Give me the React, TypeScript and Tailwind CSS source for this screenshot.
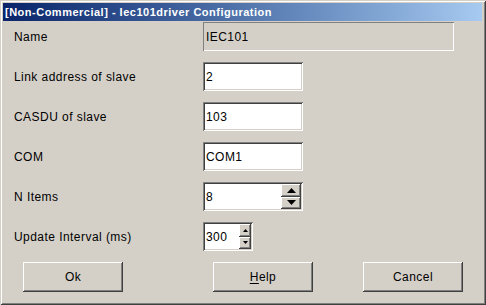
import React from 'react';

const raised =
  'shadow-[inset_-1px_-1px_#404040,inset_1px_1px_#ffffff,inset_-2px_-2px_#808080,inset_2px_2px_#d4d0c8]';
const sunken =
  'shadow-[inset_1px_1px_#808080,inset_-1px_-1px_#ffffff,inset_2px_2px_#404040,inset_-2px_-2px_#d4d0c8]';

const Label: React.FC<{ text: string }> = ({ text }) => (
  <div className="w-[189px] shrink-0 text-black">{text}</div>
);

const TextBox: React.FC<{ value: string }> = ({ value }) => (
  <div className={`w-[100px] h-[29px] bg-white flex items-center pl-[3px] ${sunken}`}>{value}</div>
);

const Arrow: React.FC<{ up?: boolean; big?: boolean }> = ({ up, big }) => {
  const w = big ? 9 : 5;
  const h = big ? 5 : 3;
  return (
    <svg width={w} height={h} viewBox={`0 0 ${w} ${h}`}>
      <polygon points={up ? `0,${h} ${w},${h} ${w / 2},0` : `0,0 ${w},0 ${w / 2},${h}`} fill="#000" />
    </svg>
  );
};

const SpinBtn: React.FC<{ up?: boolean; big?: boolean }> = ({ up, big }) => (
  <div className={`flex-1 bg-[#d4d0c8] flex items-center justify-center ${raised}`}>
    <Arrow up={up} big={big} />
  </div>
);

const Button: React.FC<{ children: React.ReactNode; className?: string }> = ({ children, className }) => (
  <div className={`w-[100px] h-[30px] bg-[#d4d0c8] flex items-center justify-center ${raised} ${className ?? ''}`}>
    {children}
  </div>
);

export default function App() {
  return (
    <div
      className="w-[486px] h-[305px] bg-[#d4d0c8] p-[3px] flex flex-col text-[12px] tracking-[0.45px] shadow-[inset_1px_1px_#d4d0c8,inset_-1px_-1px_#404040,inset_2px_2px_#ffffff,inset_-2px_-2px_#808080]"
      style={{ fontFamily: '"Liberation Sans", Arial, sans-serif' }}
    >
      <div className="h-[18px] mr-[1px] flex items-center pl-[2px] bg-gradient-to-r from-[#0a246a] to-[#a6caf0] text-white font-bold text-[11px] tracking-[0.5px]">
        [Non-Commercial] - Iec101driver Configuration
      </div>

      <div className="flex flex-col pl-[11px] mt-[1px] gap-[11px]">
        <div className="flex items-center h-[29px]">
          <Label text="Name" />
          <div className="w-[251px] h-[29px] flex items-center pl-[3px] shadow-[inset_1px_1px_#808080,inset_-1px_-1px_#ffffff]">
            IEC101
          </div>
        </div>
        <div className="flex items-center h-[29px]">
          <Label text="Link address of slave" />
          <TextBox value="2" />
        </div>
        <div className="flex items-center h-[29px]">
          <Label text="CASDU of slave" />
          <TextBox value="103" />
        </div>
        <div className="flex items-center h-[29px]">
          <Label text="COM" />
          <TextBox value="COM1" />
        </div>
        <div className="flex items-center h-[29px]">
          <Label text="N Items" />
          <div className={`w-[100px] h-[29px] bg-white flex items-center pl-[3px] pr-[2px] py-[2px] ${sunken}`}>
            <span className="flex-1">8</span>
            <div className="w-[20px] h-full flex flex-col">
              <SpinBtn up big />
              <SpinBtn big />
            </div>
          </div>
        </div>
        <div className="flex items-center h-[29px]">
          <Label text="Update Interval (ms)" />
          <div className={`w-[50px] h-[29px] bg-white flex items-center pl-[3px] pr-[2px] py-[2px] ${sunken}`}>
            <span className="flex-1">300</span>
            <div className="w-[12px] h-full flex flex-col">
              <SpinBtn up />
              <SpinBtn />
            </div>
          </div>
        </div>
      </div>

      <div className="flex mt-[11px] pl-[20px]">
        <Button>Ok</Button>
        <Button className="ml-[90px]">
          <span>
            <span className="underline underline-offset-2">H</span>elp
          </span>
        </Button>
        <Button className="ml-[50px]">Cancel</Button>
      </div>
    </div>
  );
}
